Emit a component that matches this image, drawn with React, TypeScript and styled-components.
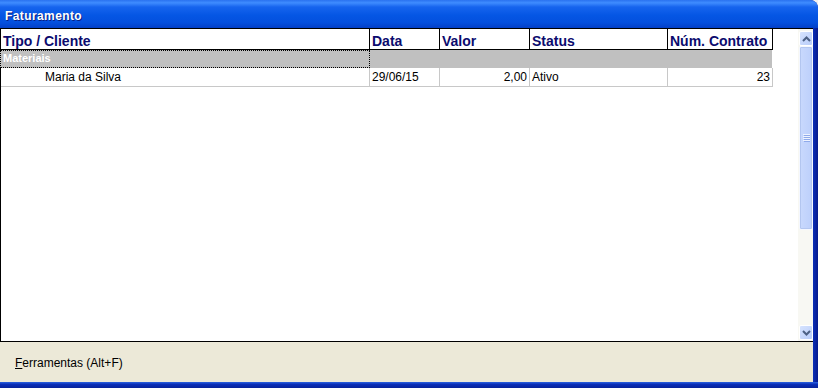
import styled, { createGlobalStyle } from 'styled-components'

const GlobalStyle = createGlobalStyle`
    html, body {
        margin: 0;
        padding: 0;
        background: #f0f0f0;
    }
    #root {
        width: 818px;
        height: 388px;
    }
`

const Window = styled.div`
    width: 818px;
    height: 388px;
    display: flex;
    flex-direction: column;
    background: #0a2aa8;
    border-top-right-radius: 8px;
    overflow: hidden;
    font-family: 'Liberation Sans', Arial, sans-serif;
`

const TitleBar = styled.div`
    height: 28px;
    flex: none;
    box-sizing: border-box;
    padding: 9px 0 0 5px;
    line-height: 14px;
    font-size: 12px;
    font-weight: bold;
    letter-spacing: 0.4px;
    color: #fff;
    text-shadow: 1px 1px 0 #0a1e80;
    background: linear-gradient(
        to bottom,
        #2a72f0 0%,
        #3f8cff 10%,
        #1664ee 25%,
        #0556e4 55%,
        #0450de 80%,
        #0340c8 100%
    );
`

const Body = styled.div`
    flex: 1;
    display: flex;
    min-height: 0;
`

const Client = styled.div`
    width: 813px;
    display: flex;
    flex-direction: column;
`

const RightFrame = styled.div`
    flex: 1;
    background: linear-gradient(to right, #0b2fb8, #061a8c);
`

const GridArea = styled.div`
    height: 314px;
    box-sizing: border-box;
    display: flex;
    border: 1px solid #000;
    border-right: none;
    background: #fff;
`

const Grid = styled.div`
    flex: 1;
    display: flex;
    flex-direction: column;
`

const Row = styled.div`
    display: flex;
`

const HeaderCell = styled.div<{ $w: number }>`
    width: ${(p) => p.$w}px;
    height: 21px;
    box-sizing: border-box;
    padding: 4px 2px 0;
    line-height: 16px;
    font-size: 14px;
    font-weight: bold;
    color: #0b0b6e;
    border-right: 1px solid #000;
    border-bottom: 1px solid #000;
    white-space: nowrap;
    overflow: hidden;
`

const GroupCell = styled.div<{ $w: number; $focus?: boolean }>`
    width: ${(p) => p.$w}px;
    height: 18px;
    box-sizing: border-box;
    padding: 0 2px;
    line-height: 14px;
    font-size: 11px;
    font-weight: bold;
    color: #fff;
    background: #c0c0c0;
    border: ${(p) => (p.$focus ? '1px dotted #000' : 'none')};
    border-top: ${(p) => (p.$focus ? '1px dotted #000' : '1px solid #c0c0c0')};
    margin-left: ${(p) => (p.$focus ? '-1px' : '0')};
    white-space: nowrap;
`

const DataCell = styled.div<{ $w: number; $right?: boolean; $indent?: number }>`
    width: ${(p) => p.$w}px;
    height: 19px;
    box-sizing: border-box;
    padding: 0 2px 0 ${(p) => p.$indent ?? 2}px;
    line-height: 18px;
    font-size: 12px;
    color: #000;
    text-align: ${(p) => (p.$right ? 'right' : 'left')};
    border-right: 1px solid #c8c8c8;
    border-bottom: 1px solid #c8c8c8;
    white-space: nowrap;
`

const Scrollbar = styled.div`
    width: 15px;
    box-sizing: border-box;
    padding: 2px 0 1px 1px;
    display: flex;
    flex-direction: column;
    background: #f8f8f3;
`

const ScrollButton = styled.div`
    height: 15px;
    flex: none;
    box-sizing: border-box;
    display: flex;
    align-items: center;
    justify-content: center;
    background: linear-gradient(to bottom right, #d6e3fe, #b9cdfa);
    border: 1px solid #fff;
    border-radius: 2px;
`

const Track = styled.div`
    flex: 1;
    display: flex;
    flex-direction: column;
`

const Thumb = styled.div`
    height: 184px;
    box-sizing: border-box;
    display: flex;
    align-items: center;
    justify-content: center;
    background: linear-gradient(to right, #c9d9fd, #bccffb);
    border: 1px solid #f4f7ff;
    border-radius: 2px;
    box-shadow: 0 0 0 1px #b3c6f0 inset;
`

const Toolbar = styled.div`
    flex: 1;
    display: flex;
    align-items: center;
    padding-left: 15px;
    padding-top: 2px;
    background: #ece9d8;
    font-size: 12px;
    color: #000;
`

const BottomFrame = styled.div`
    height: 6px;
    flex: none;
    background: linear-gradient(to bottom, #2b62df, #0a2fb8 40%, #08239a);
`

const columns = [
    { label: 'Tipo / Cliente', w: 369 },
    { label: 'Data', w: 70 },
    { label: 'Valor', w: 90 },
    { label: 'Status', w: 138 },
    { label: 'Núm. Contrato', w: 105 },
]

function Chevron({ up }: { up?: boolean }) {
    return (
        <svg width="9" height="6" viewBox="0 0 9 6">
            <polyline
                points={up ? '1,5 4.5,1.5 8,5' : '1,1 4.5,4.5 8,1'}
                fill="none"
                stroke="#4d6185"
                strokeWidth="2"
            />
        </svg>
    )
}

function Grip() {
    return (
        <svg width="7" height="8" viewBox="0 0 7 8">
            {[0, 2, 4, 6].map((y) => (
                <g key={y}>
                    <rect x="0" y={y} width="7" height="1" fill="#eef3ff" />
                    <rect x="1" y={y + 1} width="6" height="1" fill="#8faaea" />
                </g>
            ))}
        </svg>
    )
}

export default function App() {
    return (
        <>
            <GlobalStyle />
            <Window>
                <TitleBar>Faturamento</TitleBar>
                <Body>
                    <Client>
                        <GridArea>
                            <Grid>
                                <Row>
                                    {columns.map((c) => (
                                        <HeaderCell key={c.label} $w={c.w}>
                                            {c.label}
                                        </HeaderCell>
                                    ))}
                                </Row>
                                <Row>
                                    <GroupCell $w={370} $focus>
                                        Materiais
                                    </GroupCell>
                                    <GroupCell $w={402} />
                                </Row>
                                <Row>
                                    <DataCell $w={369} $indent={44}>
                                        Maria da Silva
                                    </DataCell>
                                    <DataCell $w={70}>29/06/15</DataCell>
                                    <DataCell $w={90} $right>
                                        2,00
                                    </DataCell>
                                    <DataCell $w={138}>Ativo</DataCell>
                                    <DataCell $w={105} $right>
                                        23
                                    </DataCell>
                                </Row>
                            </Grid>
                            <Scrollbar>
                                <ScrollButton>
                                    <Chevron up />
                                </ScrollButton>
                                <Track>
                                    <Thumb>
                                        <Grip />
                                    </Thumb>
                                </Track>
                                <ScrollButton>
                                    <Chevron />
                                </ScrollButton>
                            </Scrollbar>
                        </GridArea>
                        <Toolbar>
                            <span>
                                <u>F</u>erramentas (Alt+F)
                            </span>
                        </Toolbar>
                    </Client>
                    <RightFrame />
                </Body>
                <BottomFrame />
            </Window>
        </>
    )
}
